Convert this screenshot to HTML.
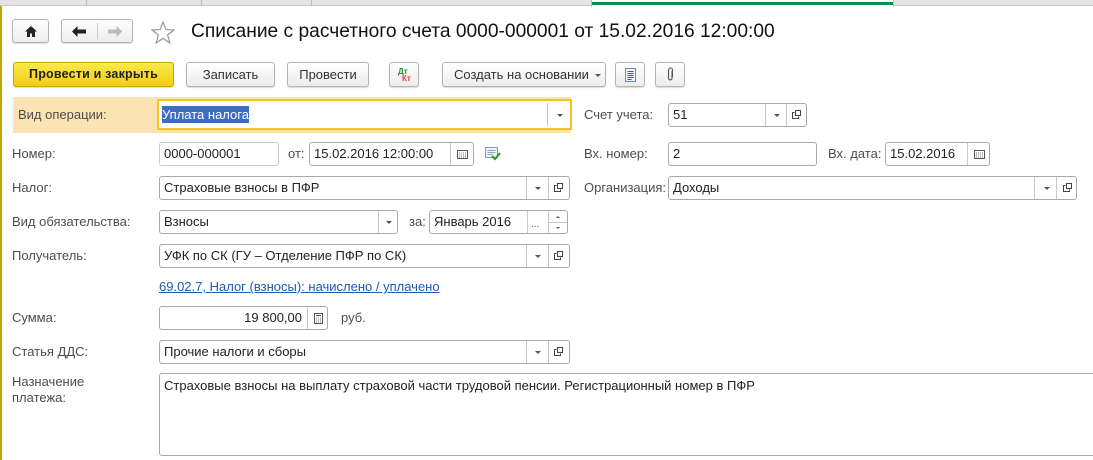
<!DOCTYPE html>
<html><head><meta charset="utf-8"><style>
*{box-sizing:border-box;margin:0;padding:0}
body{width:1093px;height:460px;overflow:hidden;background:#fff;font-family:"Liberation Sans",Arial,sans-serif;font-size:13px;color:#444;position:relative}
.a{position:absolute}
.lbl{position:absolute;color:#4d4d4d;font-size:13px;line-height:14px}
.f{position:absolute;border:1px solid #a9a9a9;border-radius:3px;background:#fff;height:24px;color:#222;font-size:13px;line-height:22px;padding-left:4px;white-space:nowrap;overflow:hidden}
.sep{position:absolute;top:0;bottom:0;border-left:1px solid #c8c8c8}
.dd{position:absolute;top:10px;width:0;height:0;border-left:3px solid transparent;border-right:3px solid transparent;border-top:3px solid #555}
.cp{position:absolute;top:6px;width:9px;height:9px}
.btn{position:absolute;height:25px;border:1px solid #b5b5b5;border-radius:3px;background:linear-gradient(#fff,#ececec);box-shadow:0 1px 1px rgba(0,0,0,.15);color:#333;font-size:13px;line-height:23px;text-align:center}
</style></head><body>
<div class="a" style="left:0;top:0;width:1093px;height:6px;background:#e4e4e4;border-bottom:1px solid #c9c9c9"></div>
<div class="a" style="left:86px;top:0;height:6px;border-left:1px solid #bbb"></div>
<div class="a" style="left:201px;top:0;height:6px;border-left:1px solid #bbb"></div>
<div class="a" style="left:311px;top:0;height:6px;border-left:1px solid #bbb"></div>
<div class="a" style="left:591px;top:0;width:303px;height:7px;background:#fff;border-left:1px solid #bbb;border-right:1px solid #bbb"></div>
<div class="a" style="left:592px;top:2px;width:301px;height:3px;background:#009245"></div>
<div class="a" style="left:0;top:6px;width:2px;height:454px;background:#c8a600"></div>

<div class="btn" style="left:12px;top:19px;width:37px;height:24px">
<svg class="a" style="left:12px;top:6px" width="12" height="11" viewBox="0 0 12 11"><path d="M6 0L0 5.5H2V11H5V7.5H7V11H10V5.5H12Z" fill="#222"/></svg></div>
<div class="btn" style="left:61px;top:19px;width:72px;height:24px">
<div class="a" style="left:35px;top:3px;height:16px;border-left:1px solid #ccc"></div>
<svg class="a" style="left:10px;top:6px" width="14" height="11" viewBox="0 0 14 11"><path d="M0 5.5L5.5 0V3.5H14V7.5H5.5V11Z" fill="#222"/></svg>
<svg class="a" style="left:46px;top:6px" width="14" height="11" viewBox="0 0 14 11"><path d="M14 5.5L8.5 0V3.5H0V7.5H8.5V11Z" fill="#bbb"/></svg></div>
<svg class="a" style="left:151px;top:21px" width="24" height="23" viewBox="0 0 24 23"><path d="M12 1L14.9 8.6 23 8.9 16.6 14 18.9 22 12 17.4 5.1 22 7.4 14 1 8.9 9.1 8.6Z" fill="none" stroke="#999" stroke-width="1.2"/></svg>
<div class="a" style="left:191px;top:21px;font-size:19.2px;color:#111;line-height:22px;white-space:nowrap">Списание с расчетного счета 0000-000001 от 15.02.2016 12:00:00</div>

<div class="btn" style="left:13px;top:62px;width:161px;background:linear-gradient(#fbe84a,#f2cf10);border-color:#c9a800;color:#222;font-weight:bold;font-size:12.5px;letter-spacing:0.2px">Провести и закрыть</div>
<div class="btn" style="left:186px;top:62px;width:89px">Записать</div>
<div class="btn" style="left:287px;top:62px;width:82px">Провести</div>
<div class="btn" style="left:389px;top:62px;width:30px;font-size:8px;font-weight:bold;line-height:8px">
<span class="a" style="left:8px;top:5px;color:#2a8a2a">Дт</span><span class="a" style="left:12px;top:12px;color:#e33">Кт</span></div>
<div class="btn" style="left:442px;top:62px;width:164px;text-align:left;padding-left:11px">Создать на основании<div class="dd" style="left:152px;top:11px"></div></div>
<div class="btn" style="left:615px;top:62px;width:30px">
<svg class="a" style="left:9px;top:5px" width="11" height="14" viewBox="0 0 11 14"><rect x=".5" y=".5" width="10" height="13" fill="#eef4fb" stroke="#6a8bb0"/><path d="M2.5 3.5H8.5M2.5 5.5H8.5M2.5 7.5H8.5M2.5 9.5H8.5M2.5 11.5H6.5" stroke="#556" stroke-width="1"/></svg></div>
<div class="btn" style="left:655px;top:62px;width:30px">
<svg class="a" style="left:11px;top:4px" width="7" height="15" viewBox="0 0 7 15"><path d="M5 4V11.5A1.8 1.8 0 0 1 1.5 11.5V3A2 2 0 0 1 5.5 3V10" fill="none" stroke="#555" stroke-width="1.1"/></svg></div>

<div class="a" style="left:13px;top:97px;width:558px;height:36px;background:#fbe3b3"></div>
<div class="lbl" style="left:18px;top:108px">Вид операции:</div>
<div class="f" style="left:157px;top:99px;width:415px;height:31px;border:2px solid #f5c518;border-radius:0;line-height:27px;padding-left:3px"><span style="background:#3d6cc8;color:#fff;padding:1px 0">Уплата налога</span><div class="sep" style="left:388px;top:2px;bottom:2px"></div><div class="dd" style="left:398px;top:13px"></div></div>

<div class="lbl" style="left:584px;top:108px">Счет учета:</div>
<div class="f" style="left:668px;top:103px;width:139px">51<div class="sep" style="left:96px"></div><div class="dd" style="left:105px"></div><div class="sep" style="left:117px"></div>
<svg class="cp" style="left:123px" viewBox="0 0 9 9"><path d="M3.5.5H8.5V5.5H3.5ZM2.5 2.5H.5V8.5H6.5V6.5" fill="none" stroke="#444"/></svg></div>

<div class="lbl" style="left:12px;top:147px">Номер:</div>
<div class="f" style="left:159px;top:142px;width:120px;border-color:#ccc">0000-000001</div>
<div class="lbl" style="left:288px;top:147px">от:</div>
<div class="f" style="left:309px;top:142px;width:165px">15.02.2016 12:00:00<div class="sep" style="left:140px"></div>
<svg class="a" style="left:147px;top:7px" width="11" height="9" viewBox="0 0 11 9"><rect x=".5" y=".5" width="10" height="8" fill="#fff" stroke="#555"/><path d="M2 3H9M2 5H9M2 7H9" stroke="#777" stroke-dasharray="1 1"/></svg></div>
<svg class="a" style="left:485px;top:147px" width="16" height="14" viewBox="0 0 16 14"><rect x=".5" y=".5" width="12" height="10" fill="#eef3f8" stroke="#7a9ab8"/><path d="M2.5 3.5H10.5M2.5 5.5H10.5M2.5 7.5H8" stroke="#8aa"/><path d="M7 9L10 12 15 6" fill="none" stroke="#2a9a2a" stroke-width="2"/></svg>

<div class="lbl" style="left:584px;top:147px">Вх. номер:</div>
<div class="f" style="left:668px;top:142px;width:149px">2</div>
<div class="lbl" style="left:828px;top:147px">Вх. дата:</div>
<div class="f" style="left:885px;top:142px;width:105px">15.02.2016<div class="sep" style="left:81px"></div>
<svg class="a" style="left:88px;top:7px" width="11" height="9" viewBox="0 0 11 9"><rect x=".5" y=".5" width="10" height="8" fill="#fff" stroke="#555"/><path d="M2 3H9M2 5H9M2 7H9" stroke="#777" stroke-dasharray="1 1"/></svg></div>

<div class="lbl" style="left:12px;top:181px">Налог:</div>
<div class="f" style="left:159px;top:176px;width:411px">Страховые взносы в ПФР<div class="sep" style="left:366px"></div><div class="dd" style="left:375px"></div><div class="sep" style="left:388px"></div>
<svg class="cp" style="left:394px" viewBox="0 0 9 9"><path d="M3.5.5H8.5V5.5H3.5ZM2.5 2.5H.5V8.5H6.5V6.5" fill="none" stroke="#444"/></svg></div>
<div class="lbl" style="left:584px;top:181px">Организация:</div>
<div class="f" style="left:668px;top:176px;width:409px">Доходы<div class="sep" style="left:365px"></div><div class="dd" style="left:375px"></div><div class="sep" style="left:387px"></div>
<svg class="cp" style="left:394px" viewBox="0 0 9 9"><path d="M3.5.5H8.5V5.5H3.5ZM2.5 2.5H.5V8.5H6.5V6.5" fill="none" stroke="#444"/></svg></div>

<div class="lbl" style="left:12px;top:215px">Вид обязательства:</div>
<div class="f" style="left:159px;top:210px;width:239px">Взносы<div class="sep" style="left:218px"></div><div class="dd" style="left:226px"></div></div>
<div class="lbl" style="left:409px;top:215px">за:</div>
<div class="f" style="left:429px;top:210px;width:139px">Январь 2016<div class="sep" style="left:97px"></div><span class="a" style="left:101px;top:3px;font-size:10px;color:#555">...</span><div class="sep" style="left:118px"></div>
<div class="a" style="left:118px;top:11px;width:20px;border-top:1px solid #c8c8c8"></div>
<div class="a" style="left:126px;top:5px;border-left:2px solid transparent;border-right:2px solid transparent;border-bottom:2px solid #555"></div>
<div class="a" style="left:126px;top:16px;border-left:2px solid transparent;border-right:2px solid transparent;border-top:2px solid #555"></div></div>

<div class="lbl" style="left:12px;top:249px">Получатель:</div>
<div class="f" style="left:159px;top:244px;width:411px">УФК по СК (ГУ – Отделение ПФР по СК)<div class="sep" style="left:366px"></div><div class="dd" style="left:375px"></div><div class="sep" style="left:388px"></div>
<svg class="cp" style="left:394px" viewBox="0 0 9 9"><path d="M3.5.5H8.5V5.5H3.5ZM2.5 2.5H.5V8.5H6.5V6.5" fill="none" stroke="#444"/></svg></div>

<div class="a" style="left:159px;top:280px;color:#1c5bb5;text-decoration:underline;line-height:14px">69.02.7, Налог (взносы): начислено / уплачено</div>

<div class="lbl" style="left:12px;top:311px">Сумма:</div>
<div class="f" style="left:159px;top:306px;width:169px;text-align:right;padding-right:25px">19 800,00<div class="sep" style="left:147px"></div>
<svg class="a" style="left:154px;top:6px" width="9" height="11" viewBox="0 0 9 11"><rect x=".5" y=".5" width="8" height="10" fill="#fff" stroke="#555"/><path d="M2 2.5H7" stroke="#555"/><path d="M2 5H7M2 7H7M2 9H7" stroke="#777" stroke-dasharray="1 1"/></svg></div>
<div class="lbl" style="left:341px;top:311px">руб.</div>

<div class="lbl" style="left:12px;top:345px">Статья ДДС:</div>
<div class="f" style="left:159px;top:340px;width:411px">Прочие налоги и сборы<div class="sep" style="left:366px"></div><div class="dd" style="left:375px"></div><div class="sep" style="left:388px"></div>
<svg class="cp" style="left:394px" viewBox="0 0 9 9"><path d="M3.5.5H8.5V5.5H3.5ZM2.5 2.5H.5V8.5H6.5V6.5" fill="none" stroke="#444"/></svg></div>

<div class="lbl" style="left:12px;top:374px;line-height:16px">Назначение<br>платежа:</div>
<div class="f" style="left:159px;top:373px;width:960px;height:83px;line-height:14px;padding-top:5px;white-space:normal">Страховые взносы на выплату страховой части трудовой пенсии. Регистрационный номер в ПФР</div>
</body></html>
